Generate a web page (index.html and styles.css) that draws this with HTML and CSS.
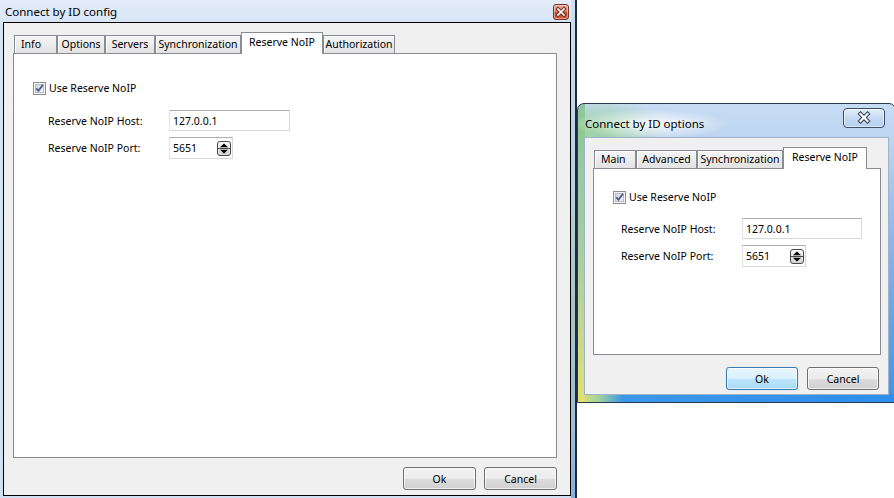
FILE: index.html
```html
<!DOCTYPE html>
<html lang="en">
<head>
<meta charset="utf-8">
<title>Connect by ID</title>
<link rel="stylesheet" href="styles.css">
</head>
<body>
<div class="desktop">
  <section class="win win-config">
    <header class="titlebar">
      <span class="title">Connect by ID config</span>
      <span class="close close-basic">
        <svg width="14" height="14" viewBox="0 0 14 14"><path d="M4 4L10 10M10 4L4 10" stroke="#6a2c1e" stroke-width="3.6" stroke-linecap="square"/><path d="M4 4L10 10M10 4L4 10" stroke="#fff" stroke-width="1.7" stroke-linecap="square"/></svg>
      </span>
    </header>
    <div class="client">
      <div class="tabbar">
        <div class="tab tab-min t-info">Info</div>
        <div class="tab t-options">Options</div>
        <div class="tab t-servers">Servers</div>
        <div class="tab t-sync">Synchronization</div>
        <div class="tab tab-active t-reserve">Reserve NoIP</div>
        <div class="tab t-auth">Authorization</div>
      </div>
      <div class="panel panel-config">
        <div class="check-row">
          <span class="checkbox"><svg width="13" height="13" viewBox="0 0 13 13"><defs><linearGradient id="cbA" x1="0" y1="0" x2="1" y2="1"><stop offset="0" stop-color="#cfd3d9"/><stop offset="1" stop-color="#f6f7f8"/></linearGradient></defs><rect x="0.5" y="0.5" width="12" height="12" fill="#f4f4f4" stroke="#8e8f8f"/><rect x="2.5" y="2.5" width="8" height="8" fill="url(#cbA)" stroke="#b9bdc3"/><path d="M3.3 6.3L5.4 8.9L9.9 2.9" fill="none" stroke="#4a5d91" stroke-width="1.8"/></svg></span>
          <span class="check-text">Use Reserve NoIP</span>
        </div>
        <div class="form form-config">
          <span class="label">Reserve NoIP Host:</span>
          <div class="field field-host">127.0.0.1</div>
          <span class="label">Reserve NoIP Port:</span>
          <div class="field field-spin"><span>5651</span><span class="spin"><svg width="14" height="15" viewBox="0 0 14 15"><defs><linearGradient id="spA" x1="0" y1="0" x2="0" y2="1"><stop offset="0" stop-color="#fbfbfb"/><stop offset="1" stop-color="#d2d2d2"/></linearGradient></defs><rect x="0.5" y="0.5" width="13" height="14" rx="2.5" fill="url(#spA)" stroke="#4a4a4a"/><path d="M1 7.5H13" stroke="#4a4a4a"/><path d="M3 6.2L7 2.4L11 6.2Z" fill="#000"/><path d="M3 8.8L7 12.6L11 8.8Z" fill="#000"/></svg></span></div>
        </div>
      </div>
      <div class="buttons buttons-config">
        <button class="btn">Ok</button>
        <button class="btn">Cancel</button>
      </div>
    </div>
  </section>

  <div class="side">
    <section class="win win-options">
      <header class="titlebar titlebar-aero">
        <span class="title title-aero">Connect by ID options</span>
        <span class="close close-aero">
          <svg width="40" height="18" viewBox="0 0 40 18"><path d="M16.5 5L23.5 12M23.5 5L16.5 12" stroke="#2c3d58" stroke-width="4.2" stroke-linecap="square"/><path d="M16.5 5L23.5 12M23.5 5L16.5 12" stroke="#fff" stroke-width="2.2" stroke-linecap="square"/></svg>
        </span>
      </header>
      <div class="client client-aero">
        <div class="tabbar">
          <div class="tab tab-min t-main">Main</div>
          <div class="tab t-adv">Advanced</div>
          <div class="tab t-sync">Synchronization</div>
          <div class="tab tab-active t-reserve2">Reserve NoIP</div>
        </div>
        <div class="panel panel-options">
          <div class="check-row">
            <span class="checkbox"><svg width="13" height="13" viewBox="0 0 13 13"><defs><linearGradient id="cbB" x1="0" y1="0" x2="1" y2="1"><stop offset="0" stop-color="#cfd3d9"/><stop offset="1" stop-color="#f6f7f8"/></linearGradient></defs><rect x="0.5" y="0.5" width="12" height="12" fill="#f4f4f4" stroke="#8e8f8f"/><rect x="2.5" y="2.5" width="8" height="8" fill="url(#cbB)" stroke="#b9bdc3"/><path d="M3.3 6.3L5.4 8.9L9.9 2.9" fill="none" stroke="#4a5d91" stroke-width="1.8"/></svg></span>
            <span class="check-text">Use Reserve NoIP</span>
          </div>
          <div class="form form-options">
            <span class="label">Reserve NoIP Host:</span>
            <div class="field field-host field-host-narrow">127.0.0.1</div>
            <span class="label">Reserve NoIP Port:</span>
            <div class="field field-spin"><span>5651</span><span class="spin"><svg width="14" height="15" viewBox="0 0 14 15"><defs><linearGradient id="spB" x1="0" y1="0" x2="0" y2="1"><stop offset="0" stop-color="#fbfbfb"/><stop offset="1" stop-color="#d2d2d2"/></linearGradient></defs><rect x="0.5" y="0.5" width="13" height="14" rx="2.5" fill="url(#spB)" stroke="#4a4a4a"/><path d="M1 7.5H13" stroke="#4a4a4a"/><path d="M3 6.2L7 2.4L11 6.2Z" fill="#000"/><path d="M3 8.8L7 12.6L11 8.8Z" fill="#000"/></svg></span></div>
          </div>
        </div>
        <div class="buttons buttons-options">
          <button class="btn btn-default">Ok</button>
          <button class="btn">Cancel</button>
        </div>
      </div>
    </section>
  </div>
</div>
</body>
</html>
```

FILE: styles.css
```css
* { box-sizing: border-box; }

html, body {
  margin: 0;
  padding: 0;
}

body {
  width: 894px;
  height: 498px;
  overflow: hidden;
  background: #ffffff;
  font-family: "Noto Sans", "Liberation Sans", Arial, sans-serif;
  font-size: 10.5px;
  color: #000;
}

.desktop {
  display: flex;
  height: 498px;
}

/* ---------- generic window ---------- */
.win {
  display: flex;
  flex-direction: column;
  flex: none;
}

.titlebar {
  display: flex;
  justify-content: space-between;
  align-items: flex-start;
  flex: none;
}

.title {
  font-size: 11.5px;
  white-space: nowrap;
}

.client {
  flex: 1;
  display: flex;
  flex-direction: column;
  background: #f0f0f0;
}

/* ---------- left window (basic theme) ---------- */
.win-config {
  width: 577px;
  height: 498px;
  padding: 0 4px 2px 3px;
  border-right: 2px solid #1c2a42;
  background:
    linear-gradient(to bottom, #cddff2 0%, #b9d0e4 35%, #a9c6c4 60%, #9fbfd8 85%, #86b0dc 100%) right top / 4px 100% no-repeat,
    linear-gradient(to bottom, #e4edf9 0px, #d6e4f4 22px, #d0e0f2 100%);
}

.win-config .titlebar {
  height: 22px;
}

.win-config .title {
  padding: 4px 0 0 2px;
  line-height: 16px;
}

.close-basic {
  width: 16px;
  height: 16px;
  margin: 4px 2px 0 0;
  border: 1px solid #7d3426;
  border-radius: 3px;
  background: linear-gradient(to bottom, #eab19f 0%, #dc8268 45%, #c9492c 55%, #d0603f 100%);
  box-shadow: inset 0 0 0 1px rgba(255, 230, 220, 0.45);
  display: flex;
  align-items: center;
  justify-content: center;
}

.win-config .client {
  border: 1px solid #000;
  padding: 9px 13px 5px 9px;
}

/* ---------- right window (aero) ---------- */
.side {
  width: 317px;
  flex: none;
  overflow: hidden;
  padding-top: 103px;
}

.win-options {
  width: 319px;
  height: 300px;
  padding: 0 6px 7px 6px;
  border: 1px solid #263a58;
  border-radius: 7px 7px 0 0;
  background:
    radial-gradient(ellipse 80px 15px at 72px 20px, rgba(255, 255, 255, 0.9), rgba(255, 255, 255, 0) 100%),
    radial-gradient(ellipse 70px 30px at 20px 25px, rgba(140, 205, 130, 0.8), rgba(140, 205, 130, 0) 100%),
    linear-gradient(to bottom, #8fc3a8 0%, #a6cf9e 50%, #c9d98a 80%, #e2e170 100%) left top / 7px 100% no-repeat,
    linear-gradient(to right, #e4e36c 0px, #9cd0a0 22px, #3a97ea 45px, #2f8ded 100%) left bottom / 100% 8px no-repeat,
    linear-gradient(to bottom, #c6dcf3 0px, #bed5f0 33px, #74aee4 60%, #3d94e8 100%);
}

.titlebar-aero {
  height: 33px;
}

.title-aero {
  padding: 12px 0 0 1px;
  line-height: 16px;
}

.close-aero {
  width: 42px;
  height: 20px;
  margin: 4px 4px 0 0;
  border: 1px solid #3a4f6e;
  border-radius: 4px;
  background: linear-gradient(to bottom, rgba(235, 244, 253, 0.75) 0%, rgba(200, 220, 242, 0.6) 50%, rgba(170, 198, 232, 0.55) 100%);
  box-shadow: inset 0 0 0 1px rgba(255, 255, 255, 0.55);
  display: flex;
  align-items: center;
  justify-content: center;
}

.client-aero {
  border: 1px solid #9fb3cb;
  padding: 9px 7px 4px 8px;
}

/* ---------- tabs ---------- */
.tabbar {
  display: flex;
  align-items: flex-end;
  height: 21px;
  padding-left: 1px;
  flex: none;
}

.tab {
  height: 18px;
  border: 1px solid #898c95;
  border-bottom: none;
  background: linear-gradient(to bottom, #f5f5f5 0%, #ececec 50%, #e2e2e2 100%);
  box-shadow: inset 1px 1px 0 #fbfbfb;
  display: flex;
  align-items: center;
  justify-content: center;
  white-space: nowrap;
  line-height: 14px;
  padding-bottom: 1px;
}

.tab-min {
  justify-content: flex-start;
  padding-left: 6px;
}

.tab-active {
  height: 22px;
  margin-bottom: -1px;
  background: #ffffff;
  box-shadow: none;
  position: relative;
  z-index: 1;
  padding-bottom: 4px;
}

.t-info { width: 43px; }
.t-options { width: 48px; }
.t-servers { width: 50px; }
.t-sync { width: 86px; }
.t-reserve { width: 82px; }
.t-auth { width: 72px; }
.t-main { width: 42px; }
.t-adv { width: 61px; }
.t-reserve2 { width: 84px; }

/* ---------- panel ---------- */
.panel {
  flex: 1;
  background: #ffffff;
  border: 1px solid #898c95;
  display: flex;
  flex-direction: column;
  align-items: flex-start;
}

.panel-config {
  padding: 28px 0 0 19px;
}

.panel-options {
  padding: 22px 0 0 19px;
}

.check-row {
  display: flex;
  align-items: center;
  height: 13px;
}

.checkbox {
  width: 13px;
  height: 13px;
  display: block;
  flex: none;
}

.checkbox svg,
.spin svg,
.close svg {
  display: block;
}

.check-text {
  margin-left: 3px;
  line-height: 13px;
  white-space: nowrap;
}

.form {
  display: grid;
  grid-template-columns: 121px auto;
  row-gap: 6px;
  align-items: center;
}

.form-config {
  margin: 15px 0 0 15px;
}

.form-options {
  margin: 14px 0 0 8px;
}

.label {
  white-space: nowrap;
  line-height: 14px;
}

.field {
  background: #ffffff;
  border: 1px solid #d5d9de;
  border-top-color: #abadb3;
  border-left-color: #e2e3ea;
  padding: 0 0 0 3px;
  display: flex;
  align-items: center;
  line-height: 14px;
}

.field-host {
  width: 121px;
  height: 21px;
}

.field-host-narrow {
  width: 120px;
}

.field-spin {
  width: 64px;
  height: 22px;
  justify-content: space-between;
  padding-right: 1px;
}

.spin {
  width: 14px;
  height: 15px;
}

/* ---------- buttons ---------- */
.buttons {
  display: flex;
  justify-content: flex-end;
  gap: 8px;
  flex: none;
}

.buttons-config {
  margin-top: 9px;
}

.buttons-options {
  margin-top: 12px;
  padding-right: 2px;
  gap: 9px;
}

.btn {
  width: 73px;
  height: 23px;
  padding: 0;
  font: inherit;
  color: #000;
  border: 1px solid #707070;
  border-radius: 3px;
  background: linear-gradient(to bottom, #f2f2f2 0%, #ebebeb 50%, #dddddd 51%, #cfcfcf 100%);
  box-shadow: inset 0 0 0 1px rgba(255, 255, 255, 0.7);
  line-height: 14px;
}

.buttons-options .btn {
  width: 72px;
}

.btn-default {
  border-color: #3c7fb1;
  background: linear-gradient(to bottom, #eaf6fd 0%, #d9f0fc 50%, #bee6fd 51%, #a7d9f5 100%);
  box-shadow: inset 0 0 0 1px rgba(255, 255, 255, 0.6), 0 0 1px #6fc0f2;
}
```
